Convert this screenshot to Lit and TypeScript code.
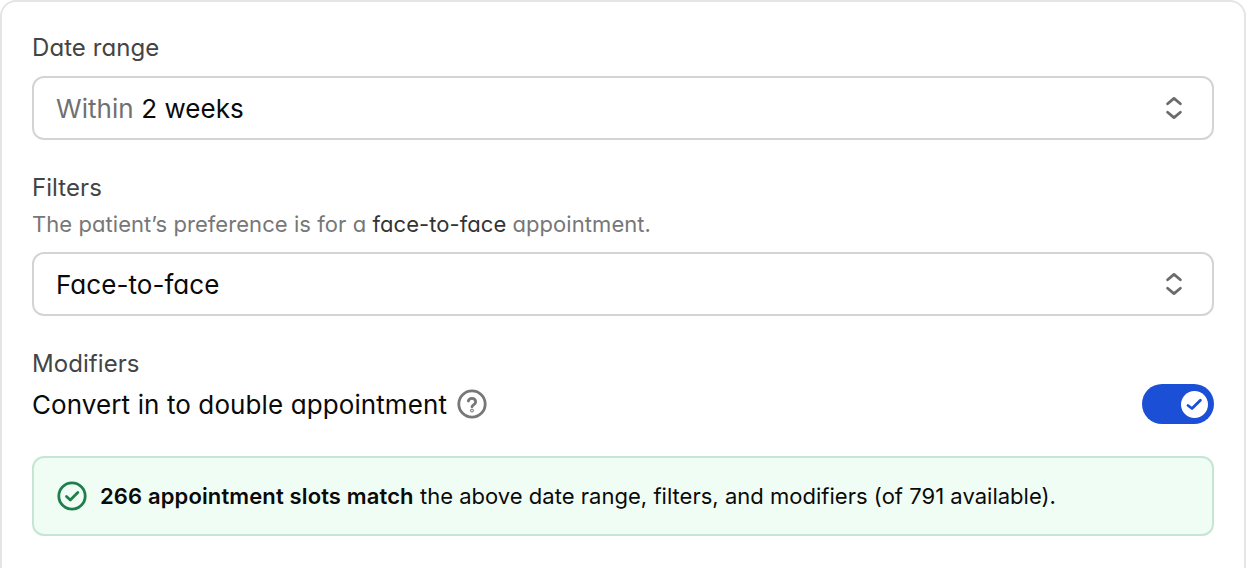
import { LitElement, html, css, svg } from "lit";
import { customElement } from "lit/decorators.js";

const chevrons = html`<svg class="chev" width="24" height="24" viewBox="0 0 24 24" fill="none" stroke="#6b6b6b" stroke-width="2.8" stroke-linecap="round" stroke-linejoin="round">${svg`<path d="M5.6 7.8 L12 2.4 L18.4 7.8"/><path d="M5.6 16.2 L12 21.6 L18.4 16.2"/>`}</svg>`;

@customElement("app-root")
export class AppRoot extends LitElement {
  static styles = css`
    :host { display: block; height: 568px; overflow: hidden; font-family: Inter, "Liberation Sans", sans-serif; font-feature-settings: "cv11"; color: #0a0a0a; background: #fff; }
    .card { box-sizing: border-box; width: 1246px; height: 620px; border: 2px solid #e5e5e5; border-radius: 16px; padding: 30px 30px 0; display: flex; flex-direction: column; }
    .label { font-size: 24px; line-height: 32px; color: #444; letter-spacing: 0.07px; }
    .hint { font-size: 22px; line-height: 32px; margin-top: 4px; color: #777; letter-spacing: 0.06px; }
    .hint b { font-weight: 400; color: #333; }
    .select { box-sizing: border-box; height: 64px; margin-top: 12px; border: 2px solid #d4d4d4; border-radius: 12px; padding: 0 26px 0 22px; display: flex; align-items: center; justify-content: space-between; font-size: 26px; letter-spacing: 0.05px; color: #0a0a0a; }
    .select .muted { color: #707070; }
    .filters { margin-top: 32px; }
    .modifiers { margin-top: 32px; }
    .row { display: flex; align-items: center; justify-content: space-between; height: 40px; margin-top: 4px; }
    .left { display: flex; align-items: center; gap: 10px; font-size: 26px; letter-spacing: 0.1px; }
    .toggle { width: 72px; height: 40px; border-radius: 20px; background: #1b4fd6; display: flex; align-items: center; justify-content: flex-end; padding-right: 6px; box-sizing: border-box; }
    .knob { width: 27px; height: 27px; border-radius: 50%; background: #fff; display: flex; align-items: center; justify-content: center; }
    .banner { box-sizing: border-box; height: 80px; margin-top: 32px; border: 2px solid #c5e6d2; border-radius: 12px; background: #f0fdf4; padding: 0 22px 0 23px; display: flex; align-items: center; gap: 13px; font-size: 22px; letter-spacing: 0.02px; font-feature-settings: normal; }
    .banner b { font-weight: 600; letter-spacing: 0.13px; }
    svg { display: block; flex: none; }
  `;

  render() {
    return html`<div class="card">
      <div class="label">Date range</div>
      <div class="select"><span><span class="muted">Within</span> 2 weeks</span>${chevrons}</div>
      <div class="filters">
        <div class="label">Filters</div>
        <div class="hint">The patient’s preference is for a <b>face-to-face</b> appointment.</div>
        <div class="select"><span>Face-to-face</span>${chevrons}</div>
      </div>
      <div class="modifiers">
        <div class="label">Modifiers</div>
        <div class="row">
          <div class="left">Convert in to double appointment
            <svg width="30" height="30" viewBox="0 0 30 30" fill="none" stroke="#777" stroke-width="2.8" stroke-linecap="round" stroke-linejoin="round"><circle cx="15" cy="15" r="13.2"/><path d="M11.3 12a3.8 3.8 0 0 1 7.4 1c0 2.5-3.7 3-3.7 4.8"/><circle cx="15" cy="21.6" r="0.5"/></svg>
          </div>
          <div class="toggle"><div class="knob"><svg width="19" height="19" viewBox="0 0 19 19" fill="none" stroke="#1b4fd6" stroke-width="2.8" stroke-linecap="round" stroke-linejoin="round"><path d="M3 10.5 L7 13.5 L15.4 5.3"/></svg></div></div>
        </div>
      </div>
      <div class="banner">
        <svg width="30" height="30" viewBox="0 0 30 30" fill="none" stroke="#1f7f4c" stroke-width="2.8" stroke-linecap="round" stroke-linejoin="round"><circle cx="15" cy="15" r="13.2"/><path d="M9.5 15.5 L13.3 19 L20.8 11.5"/></svg>
        <span><b>266 appointment slots match</b> the above date range, filters, and modifiers (of 791 available).</span>
      </div>
    </div>`;
  }
}
